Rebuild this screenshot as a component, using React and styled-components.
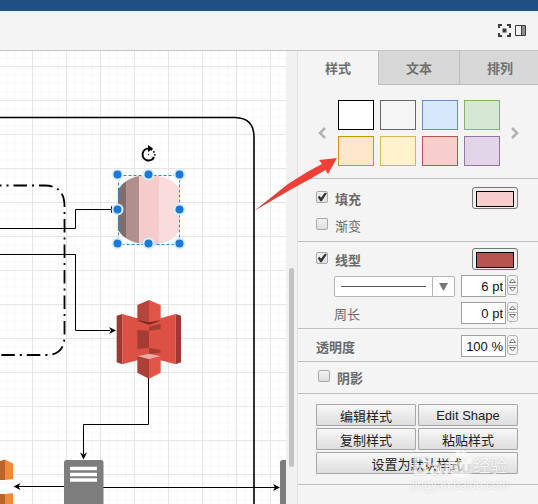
import React, { useState } from "react";
import styled, { createGlobalStyle } from "styled-components";

const GlobalStyle = createGlobalStyle`
  * { box-sizing: border-box; }
  body { margin: 0; background: #f4f4f4; }
  body, button, input, select {
    font-family: "Liberation Sans", "Noto Sans CJK SC", sans-serif;
    font-size: 13px;
  }
`;

const Page = styled.div`
  position: relative;
  display: flex;
  flex-direction: column;
  min-height: 100vh;
  overflow: hidden;
`;

const TitleBar = styled.header`
  height: 14px;
  background: #205081;
  border-bottom: 3px solid #eaf1f8;
`;

const Toolbar = styled.div`
  display: flex;
  align-items: center;
  justify-content: flex-end;
  gap: 4px;
  height: 37px;
  padding: 0 12px 4px 0;
  background: #f4f4f4;
  border-bottom: 1px solid #c4c4c4;
`;

const ToolButton = styled.button`
  display: flex;
  padding: 0;
  border: 0;
  background: none;
`;

const Workspace = styled.main`
  display: flex;
  flex: 1;
`;

const Canvas = styled.section`
  display: flex;
  flex: 1;
  min-width: 0;
  background: #fff;
`;

const Drawing = styled.svg`
  display: block;
  flex: 1;
  width: 100%;
`;

const ScrollTrack = styled.div`
  width: 12px;
  padding: 217px 3px 0;
  background: #f1f1f1;
  border-right: 1px solid #e2e2e2;
`;

const ScrollThumb = styled.div`
  height: 199px;
  border-radius: 3px;
  background: #c2c2c2;
`;

const Panel = styled.aside`
  width: 240px;
  flex-shrink: 0;
  overflow: hidden;
  background: #f4f4f4;
  color: #6a6a6a;
`;

const Tabs = styled.div`
  display: flex;
`;

const Tab = styled.button`
  flex: 0 0 ${(p) => (p.$active ? 80 : 81)}px;
  height: 34px;
  padding: 0;
  border: 0;
  border-left: ${(p) => (p.$active ? "0" : "1px solid #bdbdbd")};
  border-bottom: 1px solid ${(p) => (p.$active ? "transparent" : "#bdbdbd")};
  background: ${(p) => (p.$active ? "#f4f4f4" : "#d7d7d7")};
  color: #707070;
  font-weight: bold;
`;

const Section = styled.section`
  display: flex;
  flex-direction: column;
  gap: ${(p) => p.$gap || 0}px;
  padding: ${(p) => p.$pad};
  border-bottom: 1px solid #c0c0c0;
`;

const Presets = styled.div`
  display: flex;
  align-items: center;
  justify-content: space-between;
`;

const SwatchGrid = styled.div`
  display: grid;
  grid-template-columns: repeat(4, 36px);
  gap: 6px;
`;

const Swatch = styled.button`
  height: 30px;
  padding: 0;
  background: ${(p) => p.$fill};
  border: 1px solid ${(p) => p.$line};
`;

const Row = styled.div`
  display: flex;
  align-items: center;
  justify-content: space-between;
  height: ${(p) => p.$height || 22}px;
  padding-left: ${(p) => (p.$indent ? 18 : 0)}px;
`;

const CheckLabel = styled.label`
  display: flex;
  align-items: center;
  gap: 7px;
  font-weight: ${(p) => (p.$strong ? "bold" : "normal")};
`;

const Check = styled.input`
  appearance: none;
  width: 12px;
  height: 12px;
  margin: 0 0 2px;
  border: 1px solid #a9a9a9;
  border-radius: 2px;
  background: linear-gradient(#f2f2f2, #dedede);
  &:checked::after {
    content: "";
    display: block;
    height: 10px;
    background: #333;
    clip-path: polygon(8% 52%, 26% 38%, 40% 58%, 80% 4%, 98% 14%, 46% 92%, 34% 92%);
  }
`;

const ColorButton = styled.button`
  width: 46px;
  height: 22px;
  padding: 3px;
  border: 1px solid #777;
  border-radius: 3px;
  background: #f3eeee;
  &::after {
    content: "";
    display: block;
    height: 14px;
    border: 1px solid #000;
    background: ${(p) => p.$color};
  }
`;

const FieldLabel = styled.label`
  font-weight: ${(p) => (p.$strong ? "bold" : "normal")};
`;

const Spin = styled.div`
  display: flex;
  gap: 1px;
`;

const SpinInput = styled.input`
  width: 45px;
  height: 22px;
  padding: 0 2px;
  border: 1px solid #a0a0a0;
  border-radius: 0;
  background: #fff;
  color: #111;
  text-align: right;
`;

const Steps = styled.div`
  display: flex;
  flex-direction: column;
  width: 11px;
  height: 20px;
  border: 1px solid #b4b4b4;
  border-radius: 3px;
`;

const Step = styled.button`
  display: flex;
  align-items: center;
  justify-content: center;
  flex: 1;
  padding: 0;
  border: 0;
  background: none;
  & + & { border-top: 1px solid #b4b4b4; }
`;

const PatternBox = styled.div`
  display: grid;
  width: 121px;
  height: 21px;
  border: 1px solid #b4b4b4;
  border-radius: 2px;
  background: #fff;
  & > * { grid-area: 1 / 1; }
`;

const PatternSelect = styled.select`
  appearance: none;
  border: 0;
  background: none;
`;

const PatternArt = styled.svg`
  pointer-events: none;
`;

const Actions = styled.div`
  display: grid;
  grid-template-columns: 1fr 1fr;
  gap: 2px;
`;

const Action = styled.button`
  grid-column: ${(p) => (p.$wide ? "1 / -1" : "auto")};
  height: 22px;
  padding: 0;
  border: 1px solid #a6a6a6;
  border-radius: 1px;
  background: linear-gradient(#f8f8f8, #dddddd);
  color: #222;
`;

const Overlay = styled.svg`
  position: absolute;
  left: 0;
  top: 0;
  pointer-events: none;
`;

const Watermark = styled.div`
  position: absolute;
  left: 412px;
  top: 446px;
  pointer-events: none;
  opacity: 0.65;
  color: #fff;
  text-shadow: 0 0 2px rgba(0, 0, 0, 0.3);
`;

const Brand = styled.div`
  display: flex;
  align-items: flex-end;
  height: 33px;
  font-size: 24px;
  line-height: 24px;
  font-weight: bold;
`;

const Paw = styled.span`
  display: grid;
  justify-items: center;
  align-items: end;
  color: #fff;
  & > * { grid-area: 1 / 1; }
`;

const PawText = styled.span`
  color: #d4d4d4;
  font-size: 16px;
  line-height: 22px;
  text-shadow: none;
`;

const BrandWord = styled.span`
  font-size: 17px;
  font-weight: normal;
`;

const Site = styled.div`
  font-size: 12px;
  line-height: 12px;
`;

const presets = [
  ["#ffffff", "#000000"],
  ["#f5f5f5", "#666666"],
  ["#d8e8fb", "#6c8ebf"],
  ["#d5e8d4", "#82b366"],
  ["#ffe6cc", "#c9960a"],
  ["#fff2cc", "#d6b656"],
  ["#f8cecc", "#b85450"],
  ["#e1d5e7", "#9673a6"],
];

const handles = [
  [117, 174], [148, 174], [179, 174],
  [117, 209], [179, 209],
  [117, 243], [148, 243], [179, 243],
];

function Chevron({ flip }) {
  return (
    <svg width="10" height="12" viewBox="0 0 10 12">
      <path d={flip ? "M2 1l5 5-5 5" : "M8 1L3 6l5 5"} fill="none" stroke="#b2b2b2" strokeWidth="2.6" />
    </svg>
  );
}

function NumberField({ id, initial, label }) {
  const [value, setValue] = useState(initial);
  const bump = (d) => setValue((v) => v.replace(/^-?\d+/, (n) => String(Math.max(0, Number(n) + d))));
  return (
    <Spin>
      <SpinInput id={id} aria-label={label} value={value} onChange={(e) => setValue(e.target.value)} />
      <Steps>
        <Step aria-label="+" onClick={() => bump(1)}>
          <svg width="9" height="5"><path d="M1.5 4.5L4.5 1l3 3.500z" fill="#fff" stroke="#777" /></svg>
        </Step>
        <Step aria-label="-" onClick={() => bump(-1)}>
          <svg width="9" height="5"><path d="M1.500 .5L4.500 4l3-3.500z" fill="#fff" stroke="#777" /></svg>
        </Step>
      </Steps>
    </Spin>
  );
}

function Diagram() {
  return (
    <Drawing>
      <defs>
        <pattern id="grid" x="32" y="66" width="34" height="34" patternUnits="userSpaceOnUse">
          <path d="M9 0V34M17 0V34M26 0V34M0 9H34M0 17H34M0 26H34" stroke="#f7f7f7" />
          <path d="M.5 0V34M0 .5H34" stroke="#e6e6e6" />
        </pattern>
        <clipPath id="bucket">
          <path d="M53 180Q75 143 128 136H165Q222 146 238 176V300Q222 336 168 343H130Q72 334 53 298Z" />
        </clipPath>
      </defs>
      <g transform="translate(0 -51)">
        <rect y="51" width="100%" height="100%" fill="url(#grid)" />
        <path d="M0 117.500H235Q254 118 254 137V1200" fill="none" stroke="#000" strokeWidth="1.600" />
        <path d="M0 185.500H45Q64.500 186 64.500 206V336Q64.500 355 46 355H0" fill="none" stroke="#000" strokeWidth="1.800" strokeDasharray="13.500 5 2 5" strokeDashoffset="12" />
        <g fill="none" stroke="#000">
          <path d="M0 228.500H75.500V209.500H114" />
          <path d="M0 254.500H75.500V330.500H110" />
          <path d="M148.500 378V424.500H83.500V454" />
          <path d="M64 486.500H18M103 487.500H275" />
        </g>
        <path d="M116 330.500l-7-3.500 2 3.500-2 3.500zM83.500 459.500l-3.500-7 3.500 2 3.500-2zM13.500 486.500l7-3.500-2 3.500 2 3.500zM280 487.500l-7-3.500 2 3.500-2 3.500zM111 206v7l5-3.500z" />

        <g transform="translate(100 290) scale(.3333)">
          <path d="M67 72L112 85H182L227 72V223L182 211H112L67 223Z" fill="#dd5144" />
          <path d="M50 77L67 72V223L50 217ZM227 72L243 77V217L227 223Z" fill="#9c3a32" />
          <path d="M112 120L147 122V173L112 178Z" fill="#a53c34" />
          <path d="M147 110L182 101V118L147 122ZM147 174L182 180V188L147 192Z" fill="#a53c34" />
          <path d="M112 92L147 86L182 92L147 104Z" fill="#7c2921" />
          <path d="M112 45L147 30V97L112 90Z" fill="#b5443b" />
          <path d="M147 30L182 45V90L147 97Z" fill="#e05548" />
          <path d="M112 199L147 191L182 199L147 208Z" fill="#f2a9a0" />
          <path d="M112 199L147 208V266L112 248Z" fill="#aa4037" />
          <path d="M147 208L182 199V248L147 266Z" fill="#e05548" />
        </g>

        <g transform="translate(100 130) scale(.3333)">
          <g clipPath="url(#bucket)">
            <rect x="50" y="130" width="28" height="220" fill="#826c6d" />
            <rect x="78" y="130" width="40" height="220" fill="#b18f8e" />
            <rect x="118" y="130" width="59" height="220" fill="#f5cccc" />
            <rect x="177" y="130" width="65" height="220" fill="#fadcdc" />
          </g>
        </g>
        <rect x="118.500" y="175.500" width="61" height="69" fill="none" stroke="#2f86c8" strokeDasharray="3 2" />
        {handles.map(([x, y]) => (
          <g key={`${x}-${y}`} transform={`translate(${x + 0.5} ${y + 0.5})`}>
            <circle r="6" fill="#d9eefa" />
            <circle r="4" fill="#1a78d6" />
          </g>
        ))}
        <g fill="none" stroke="#000">
          <path d="M148.500 148.500A6 6 0 1 0 154 157" strokeWidth="2" />
          <path d="M151 149.500A6 6 0 0 1 154.500 157" strokeWidth="1.600" strokeDasharray="1.500 1.500" />
          <path d="M148 145l5 3.500-5 3.500z" fill="#000" stroke="none" />
          <circle cx="148.500" cy="154.500" r=".7" fill="#000" stroke="none" />
        </g>

        <rect x="64" y="460" width="39.500" height="60" rx="2.500" fill="#7d7d7d" />
        <path d="M70 468.500H97M70 474.500H97M70 480H97" stroke="#fff" strokeWidth="3.500" />
        <path d="M280 520V462.500Q280 460 282.500 460H300V520Z" fill="#7d7d7d" />
        <path d="M0 461L5 459.500V480H0ZM0 494H5V520H0Z" fill="#b9662a" />
        <path d="M5 459.500L13 463.500V479L5 480ZM5 494L13 493V520H5Z" fill="#ef8a3c" />
      </g>
    </Drawing>
  );
}

export default function App() {
  return (
    <Page>
      <GlobalStyle />
      <TitleBar />
      <Toolbar>
        <ToolButton aria-label="全屏">
          <svg width="13" height="13" viewBox="0 0 13 13">
            <path d="M1 4V1H4M9 1H12V4M12 9V12H9M4 12H1V9" fill="none" stroke="#3c3c3c" strokeWidth="2" />
            <rect x="4.500" y="4.500" width="4" height="4" fill="#3c3c3c" />
          </svg>
        </ToolButton>
        <ToolButton aria-label="格式面板">
          <svg width="11" height="11" viewBox="0 0 11 11">
            <rect x="6" y="1" width="4" height="9" fill="#8e8e8e" />
            <path d="M.5 .5H10.500V10.500H.5ZM6.500 1V10" fill="none" stroke="#3c3c3c" />
          </svg>
        </ToolButton>
      </Toolbar>

      <Workspace>
        <Canvas><Diagram /></Canvas>
        <ScrollTrack><ScrollThumb /></ScrollTrack>
        <Panel>
          <Tabs>
            <Tab $active>样式</Tab>
            <Tab>文本</Tab>
            <Tab>排列</Tab>
          </Tabs>

          <Section $pad="15px 18px 12px 19px">
            <Presets>
              <ToolButton aria-label="上一页"><Chevron /></ToolButton>
              <SwatchGrid>
                {presets.map(([fill, line]) => (
                  <Swatch key={fill} aria-label={fill} $fill={fill} $line={line} />
                ))}
              </SwatchGrid>
              <ToolButton aria-label="下一页"><Chevron flip /></ToolButton>
            </Presets>
          </Section>

          <Section $pad="8px 20px 5px 18px" $gap="5">
            <Row>
              <CheckLabel $strong><Check type="checkbox" defaultChecked />填充</CheckLabel>
              <ColorButton $color="#f8cecc" aria-label="填充颜色" />
            </Row>
            <Row>
              <CheckLabel><Check type="checkbox" />渐变</CheckLabel>
            </Row>
          </Section>

          <Section $pad="6px 20px 4px 18px" $gap="5">
            <Row>
              <CheckLabel $strong><Check type="checkbox" defaultChecked />线型</CheckLabel>
              <ColorButton $color="#b85450" aria-label="线条颜色" />
            </Row>
            <Row $indent>
              <PatternBox>
                <PatternSelect aria-label="线条样式">
                  <option aria-label="实线" />
                </PatternSelect>
                <PatternArt width="119" height="19">
                  <path d="M6 9.500H91" stroke="#555" />
                  <path d="M97.500 0V19" stroke="#b4b4b4" />
                  <path d="M104 6h9l-4.500 8z" fill="#777" />
                </PatternArt>
              </PatternBox>
              <NumberField label="线宽" initial="6 pt" />
            </Row>
            <Row $indent>
              <FieldLabel htmlFor="perimeter">周长</FieldLabel>
              <NumberField id="perimeter" initial="0 pt" />
            </Row>
          </Section>

          <Section $pad="6px 20px 4px 18px">
            <Row>
              <FieldLabel $strong htmlFor="opacity">透明度</FieldLabel>
              <NumberField id="opacity" initial="100 %" />
            </Row>
          </Section>

          <Section $pad="4px 20px 5px">
            <Row>
              <CheckLabel $strong><Check type="checkbox" />阴影</CheckLabel>
            </Row>
          </Section>

          <Section $pad="10px 20px 10px 18px">
            <Actions>
              <Action>编辑样式</Action>
              <Action>Edit Shape</Action>
              <Action>复制样式</Action>
              <Action>粘贴样式</Action>
              <Action $wide>设置为默认样式</Action>
            </Actions>
          </Section>
        </Panel>
      </Workspace>

      <Overlay width="340" height="215">
        <defs>
          <linearGradient id="pointer">
            <stop offset="0" stopColor="#b8474a" />
            <stop offset=".4" stopColor="#ee4038" />
          </linearGradient>
        </defs>
        <path d="M254 211L288 184L307 172L322 164L319 160L337 158L328 174L325.500 170L310 179L290 190Z" fill="url(#pointer)" />
      </Overlay>
      <Watermark>
        <Brand>
          Bai
          <Paw>
            <svg width="24" height="30" viewBox="0 0 22 30" fill="currentColor">
              <ellipse cx="3" cy="12" rx="2.500" ry="4" />
              <ellipse cx="8" cy="5" rx="2.500" ry="4" />
              <ellipse cx="14" cy="5" rx="2.500" ry="4" />
              <ellipse cx="19" cy="12" rx="2.500" ry="4" />
              <path d="M11 11C15 11 21 19 21 23S16 29 11 28S1 29 1 23S7 11 11 11Z" />
            </svg>
            <PawText>du</PawText>
          </Paw>
          <BrandWord>经验</BrandWord>
        </Brand>
        <Site>jingyan.baidu.com</Site>
      </Watermark>
    </Page>
  );
}
